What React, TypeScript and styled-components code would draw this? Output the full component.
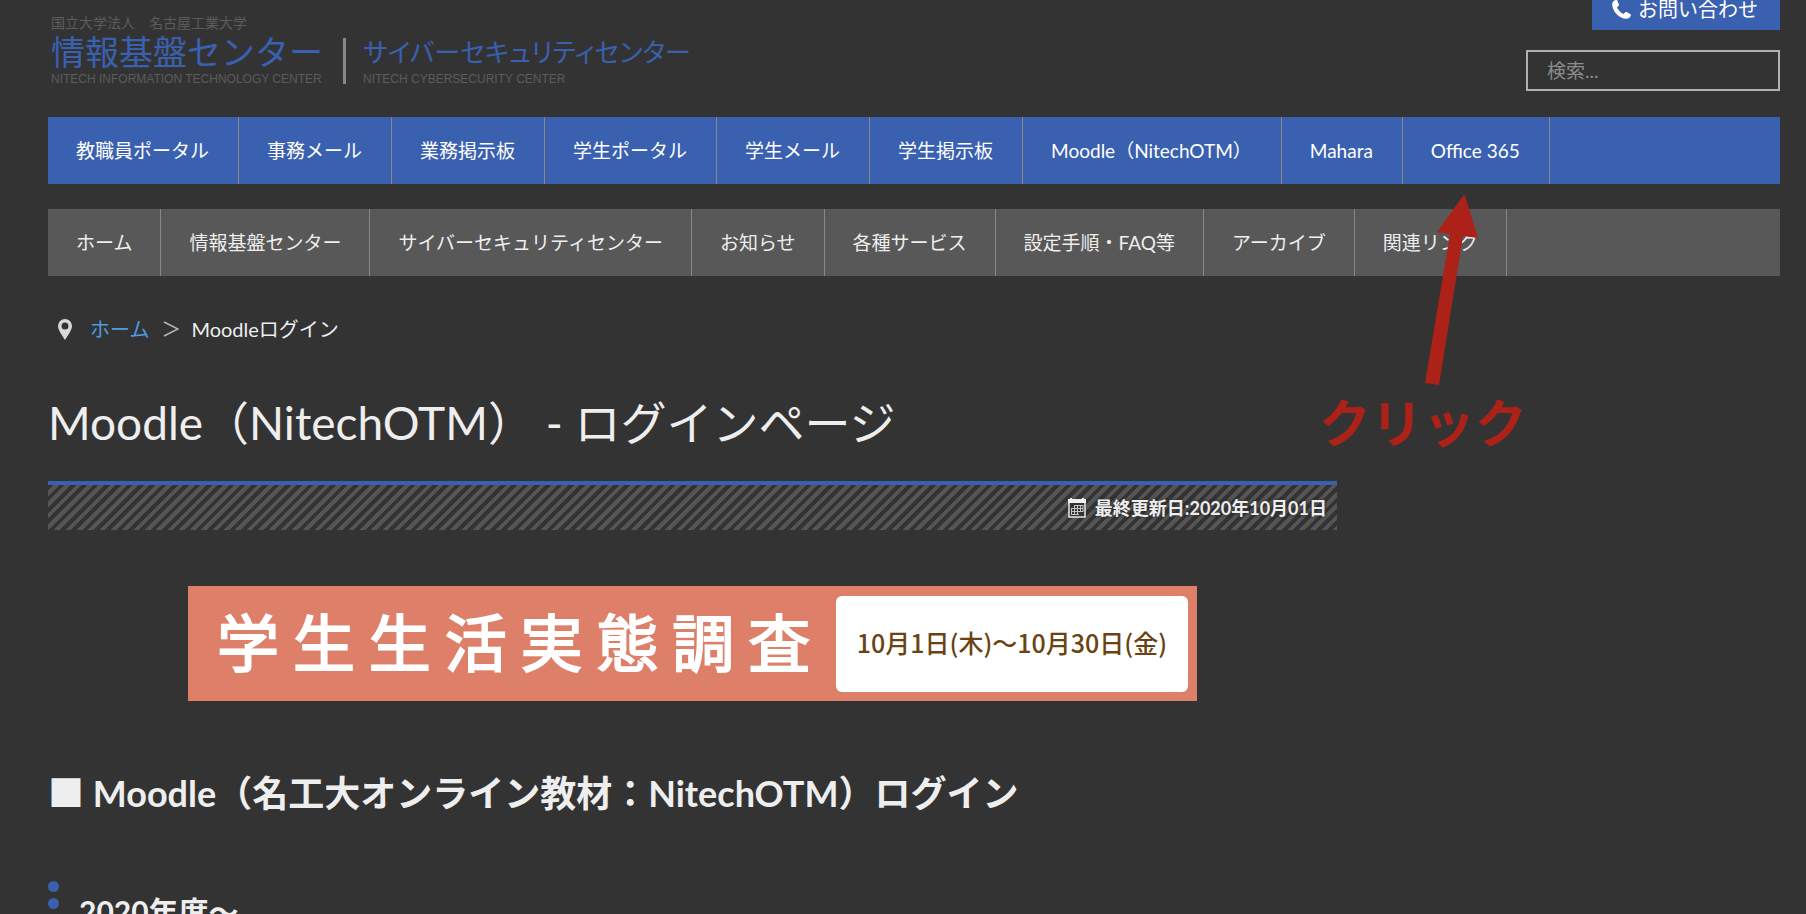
import React from "react";
import styled, { createGlobalStyle } from "styled-components";

const GlobalStyle = createGlobalStyle`
  * { box-sizing: border-box; }
  html { height: 100%; overflow: hidden; }
  body {
    margin: 0;
    height: 100%;
    overflow: hidden;
    background: #333333;
    color: #eeeeee;
    font-family: Lato, "Noto Sans CJK JP", sans-serif;
    font-size: 19px;
    line-height: 28px;
  }
  a { color: inherit; text-decoration: none; }
  h1, h2, h3, p, ul { margin: 0; padding: 0; }
`;

const Page = styled.div`
  position: relative;
  padding: 0 26px 0 48px;
`;

const Header = styled.header`
  display: flex;
  justify-content: space-between;
  height: 117px;
`;

const Logo = styled.a`
  display: flex;
  align-items: flex-end;
  gap: 17px;
  height: 87px;
  padding-left: 3px;
  font-family: "Noto Sans CJK JP", sans-serif;
`;

const LogoPart = styled.span`
  display: flex;
  flex-direction: column;
`;

const University = styled.span`
  font-size: 14px;
  line-height: 18px;
  color: #5c5c5c;
`;

const CenterName = styled.span<{ $compact?: boolean }>`
  font-size: ${(p) => (p.$compact ? 26 : 34)}px;
  line-height: 40px;
  font-weight: 400;
  color: #3a60b0;
  font-feature-settings: "palt" ${(p) => (p.$compact ? 1 : 0)};
  white-space: nowrap;
`;

const EnglishName = styled.span`
  font-family: "Liberation Sans", Arial, sans-serif;
  font-size: 12px;
  line-height: 16px;
  color: #5c5c5c;
  white-space: nowrap;
`;

const LogoDivider = styled.span`
  width: 3px;
  height: 46px;
  margin: 0 0 3px 3px;
  background: #888888;
`;

const Tools = styled.div`
  display: flex;
  flex-direction: column;
  align-items: flex-end;
  gap: 20px;
`;

const ContactLink = styled.a`
  display: flex;
  align-items: center;
  gap: 7px;
  height: 30px;
  padding: 0 22px 12px 20px;
  background: #3a60b0;
  color: #ffffff;
  font-size: 20px;
`;

const SearchInput = styled.input`
  width: 254px;
  height: 41px;
  padding: 0 19px;
  border: 2px solid #b0b0b0;
  border-radius: 0;
  background: transparent;
  color: #eeeeee;
  font: inherit;
  &::placeholder { color: #8c8c8c; opacity: 1; }
`;

const NavBar = styled.nav<{ $tone: "blue" | "grey" }>`
  margin-bottom: 25px;
  background: ${(p) => (p.$tone === "blue" ? "#3a60b0" : "#585858")};
  color: ${(p) => (p.$tone === "blue" ? "#ffffff" : "#eeeeee")};
`;

const NavList = styled.ul`
  display: flex;
  list-style: none;
`;

const NavLink = styled.a<{ $tone: "blue" | "grey" }>`
  display: block;
  padding: 1px ${(p) => (p.$tone === "blue" ? 29 : 28)}px 0 28px;
  border-right: 1px solid #888888;
  line-height: 66px;
  white-space: nowrap;
`;

const Breadcrumb = styled.nav`
  display: flex;
  align-items: center;
  margin-top: 39px;
  padding-left: 10px;
  font-size: 20px;
  a { margin: 0 14px 0 18px; color: #4f9be0; }
`;

const Crumb = styled.span`
  margin-left: 12px;
`;

const Main = styled.main`
  width: calc(75% - 10px);
`;

const Title = styled.h1`
  margin-top: 45px;
  font-size: 46px;
  line-height: 70px;
  font-weight: 400;
  white-space: nowrap;
`;

const UpdatedBar = styled.p`
  display: flex;
  align-items: center;
  justify-content: flex-end;
  gap: 9px;
  height: 49px;
  margin-top: 23px;
  padding-right: 10px;
  border-top: 4px solid #3a60b0;
  background: repeating-linear-gradient(135deg, #333333 0 4px, #555555 4px 8px);
  font-size: 18px;
  line-height: 26px;
  font-weight: 700;
  text-shadow: 0 0 3px #333333, 0 0 3px #333333;
`;

const Banner = styled.a`
  display: flex;
  align-items: center;
  justify-content: space-between;
  width: 1009px;
  max-width: 100%;
  height: 115px;
  margin: 56px auto 0;
  padding: 0 9px 0 29px;
  background: #de7f6a;
  font-family: "Noto Sans CJK JP", sans-serif;
`;

const BannerTitle = styled.span`
  padding-bottom: 8px;
  color: #ffffff;
  font-size: 62px;
  line-height: 80px;
  font-weight: 400;
  -webkit-text-stroke: 2px #ffffff;
  white-space: nowrap;
`;

const BannerDate = styled.span`
  width: 352px;
  padding-bottom: 4px;
  border-radius: 6px;
  background: #ffffff;
  color: #6a4312;
  font-size: 25px;
  line-height: 92px;
  font-weight: 500;
  text-align: center;
  white-space: nowrap;
`;

const SectionTitle = styled.h2`
  margin-top: 64px;
  font-size: 36px;
  line-height: 56px;
  font-weight: 700;
  white-space: nowrap;
`;

const YearTitle = styled.h3`
  display: flex;
  gap: 20px;
  margin-top: 60px;
  font-size: 30px;
  line-height: 60px;
  font-weight: 700;
`;

const Dots = styled.span`
  display: flex;
  flex-direction: column;
  gap: 6px;
  i {
    width: 11px;
    height: 11px;
    border-radius: 50%;
    background: #3a60b0;
  }
`;

const Annotation = styled.div`
  position: absolute;
  top: 194px;
  left: 1319px;
  color: #ad2218;
  pointer-events: none;
`;

const Arrow = styled.svg`
  display: block;
  margin-left: 106px;
`;

const ClickText = styled.strong`
  display: block;
  font-size: 52px;
  line-height: 74px;
  font-weight: 700;
`;

const portals = ["教職員ポータル", "事務メール", "業務掲示板", "学生ポータル", "学生メール", "学生掲示板", "Moodle（NitechOTM）", "Mahara", "Office 365"];
const sections = ["ホーム", "情報基盤センター", "サイバーセキュリティセンター", "お知らせ", "各種サービス", "設定手順・FAQ等", "アーカイブ", "関連リンク"];

function Menu({ items, tone, label }: { items: string[]; tone: "blue" | "grey"; label: string }) {
  return (
    <NavBar $tone={tone} aria-label={label}>
      <NavList>
        {items.map((item) => (
          <li key={item}><NavLink $tone={tone} href="#">{item}</NavLink></li>
        ))}
      </NavList>
    </NavBar>
  );
}

export default function App() {
  return (
    <>
      <GlobalStyle />
      <Page>
        <Header>
          <Logo href="#">
            <LogoPart>
              <University>国立大学法人　名古屋工業大学</University>
              <CenterName>情報基盤センター</CenterName>
              <EnglishName>NITECH INFORMATION TECHNOLOGY CENTER</EnglishName>
            </LogoPart>
            <LogoDivider />
            <LogoPart>
              <CenterName $compact>サイバーセキュリティセンター</CenterName>
              <EnglishName>NITECH CYBERSECURITY CENTER</EnglishName>
            </LogoPart>
          </Logo>
          <Tools>
            <ContactLink href="#">
              <svg width="19" height="19" viewBox="0 0 16 16" fill="currentColor" aria-hidden="true">
                <path d="M1.9.5 3.3 0c.5-.2 1 0 1.200.500l1.300 3.300c.2.5 0 1-.4 1.300L4.200 6.100c.9 2.300 2.900 4.500 5.500 5.700l1.300-1.300c.4-.4.9-.5 1.400-.3l3 1.500c.5.2.7.8.5 1.300-.6 1.700-2 2.800-4 2.800C6.200 15.800.2 9.500.2 3.800.2 2.300.8 1.100 1.900.5Z" />
              </svg>
              お問い合わせ
            </ContactLink>
            <SearchInput type="search" placeholder="検索..." aria-label="検索" />
          </Tools>
        </Header>
        <Menu items={portals} tone="blue" label="ポータル" />
        <Menu items={sections} tone="grey" label="メニュー" />
        <Breadcrumb aria-label="現在位置">
          <svg width="14" height="21" viewBox="0 0 14 21" fill="#d8d8d8" fillRule="evenodd" aria-hidden="true">
            <path d="M7 0a7 7 0 0 1 7 7c0 4-4 9-7 14C4 16 0 11 0 7a7 7 0 0 1 7-7Zm0 3.500a3.500 3.500 0 1 0 0 7 3.500 3.500 0 0 0 0-7Z" />
          </svg>
          <a href="#">ホーム</a>
          <svg width="16" height="16" viewBox="0 0 16 16" fill="none" stroke="#b8b8b8" strokeWidth="1.500" aria-hidden="true">
            <path d="M1 1l14 7-14 7" />
          </svg>
          <Crumb>Moodleログイン</Crumb>
        </Breadcrumb>
        <Main>
          <Title>Moodle（NitechOTM） - ログインページ</Title>
          <UpdatedBar>
            <svg width="18" height="20" viewBox="0 0 18 20" aria-hidden="true">
              <path d="M1 2h16v17H1z" fill="#333333" stroke="#e8e8e8" strokeWidth="1.500" />
              <path d="M0 1h2V0h2v1h10V0h2v1h2v4H0z" fill="#f0f0f0" />
              <path d="M6 7.500h9M3 10.500h12M3 13.500h12M3 16.500h8M3.500 10v7M6.500 7v10M9.500 7v10M12.500 7v7M15 7v7" fill="none" stroke="#c4c4c4" />
            </svg>
            最終更新日:2020年10月01日
          </UpdatedBar>
          <Banner href="#">
            <BannerTitle>学 生 生 活 実 態 調 査</BannerTitle>
            <BannerDate>10月1日(木)〜10月30日(金)</BannerDate>
          </Banner>
          <SectionTitle>■ Moodle（名工大オンライン教材：NitechOTM）ログイン</SectionTitle>
          <YearTitle>
            <Dots aria-hidden="true"><i /><i /></Dots>
            2020年度〜
          </YearTitle>
        </Main>
        <Annotation>
          <Arrow width="53" height="192" viewBox="0 0 53 192" fill="currentColor" aria-hidden="true">
            <path d="M39.500 0 53 44l-15-2-24 149-14-2L25 40 12 38Z" />
          </Arrow>
          <ClickText>クリック</ClickText>
        </Annotation>
      </Page>
    </>
  );
}
